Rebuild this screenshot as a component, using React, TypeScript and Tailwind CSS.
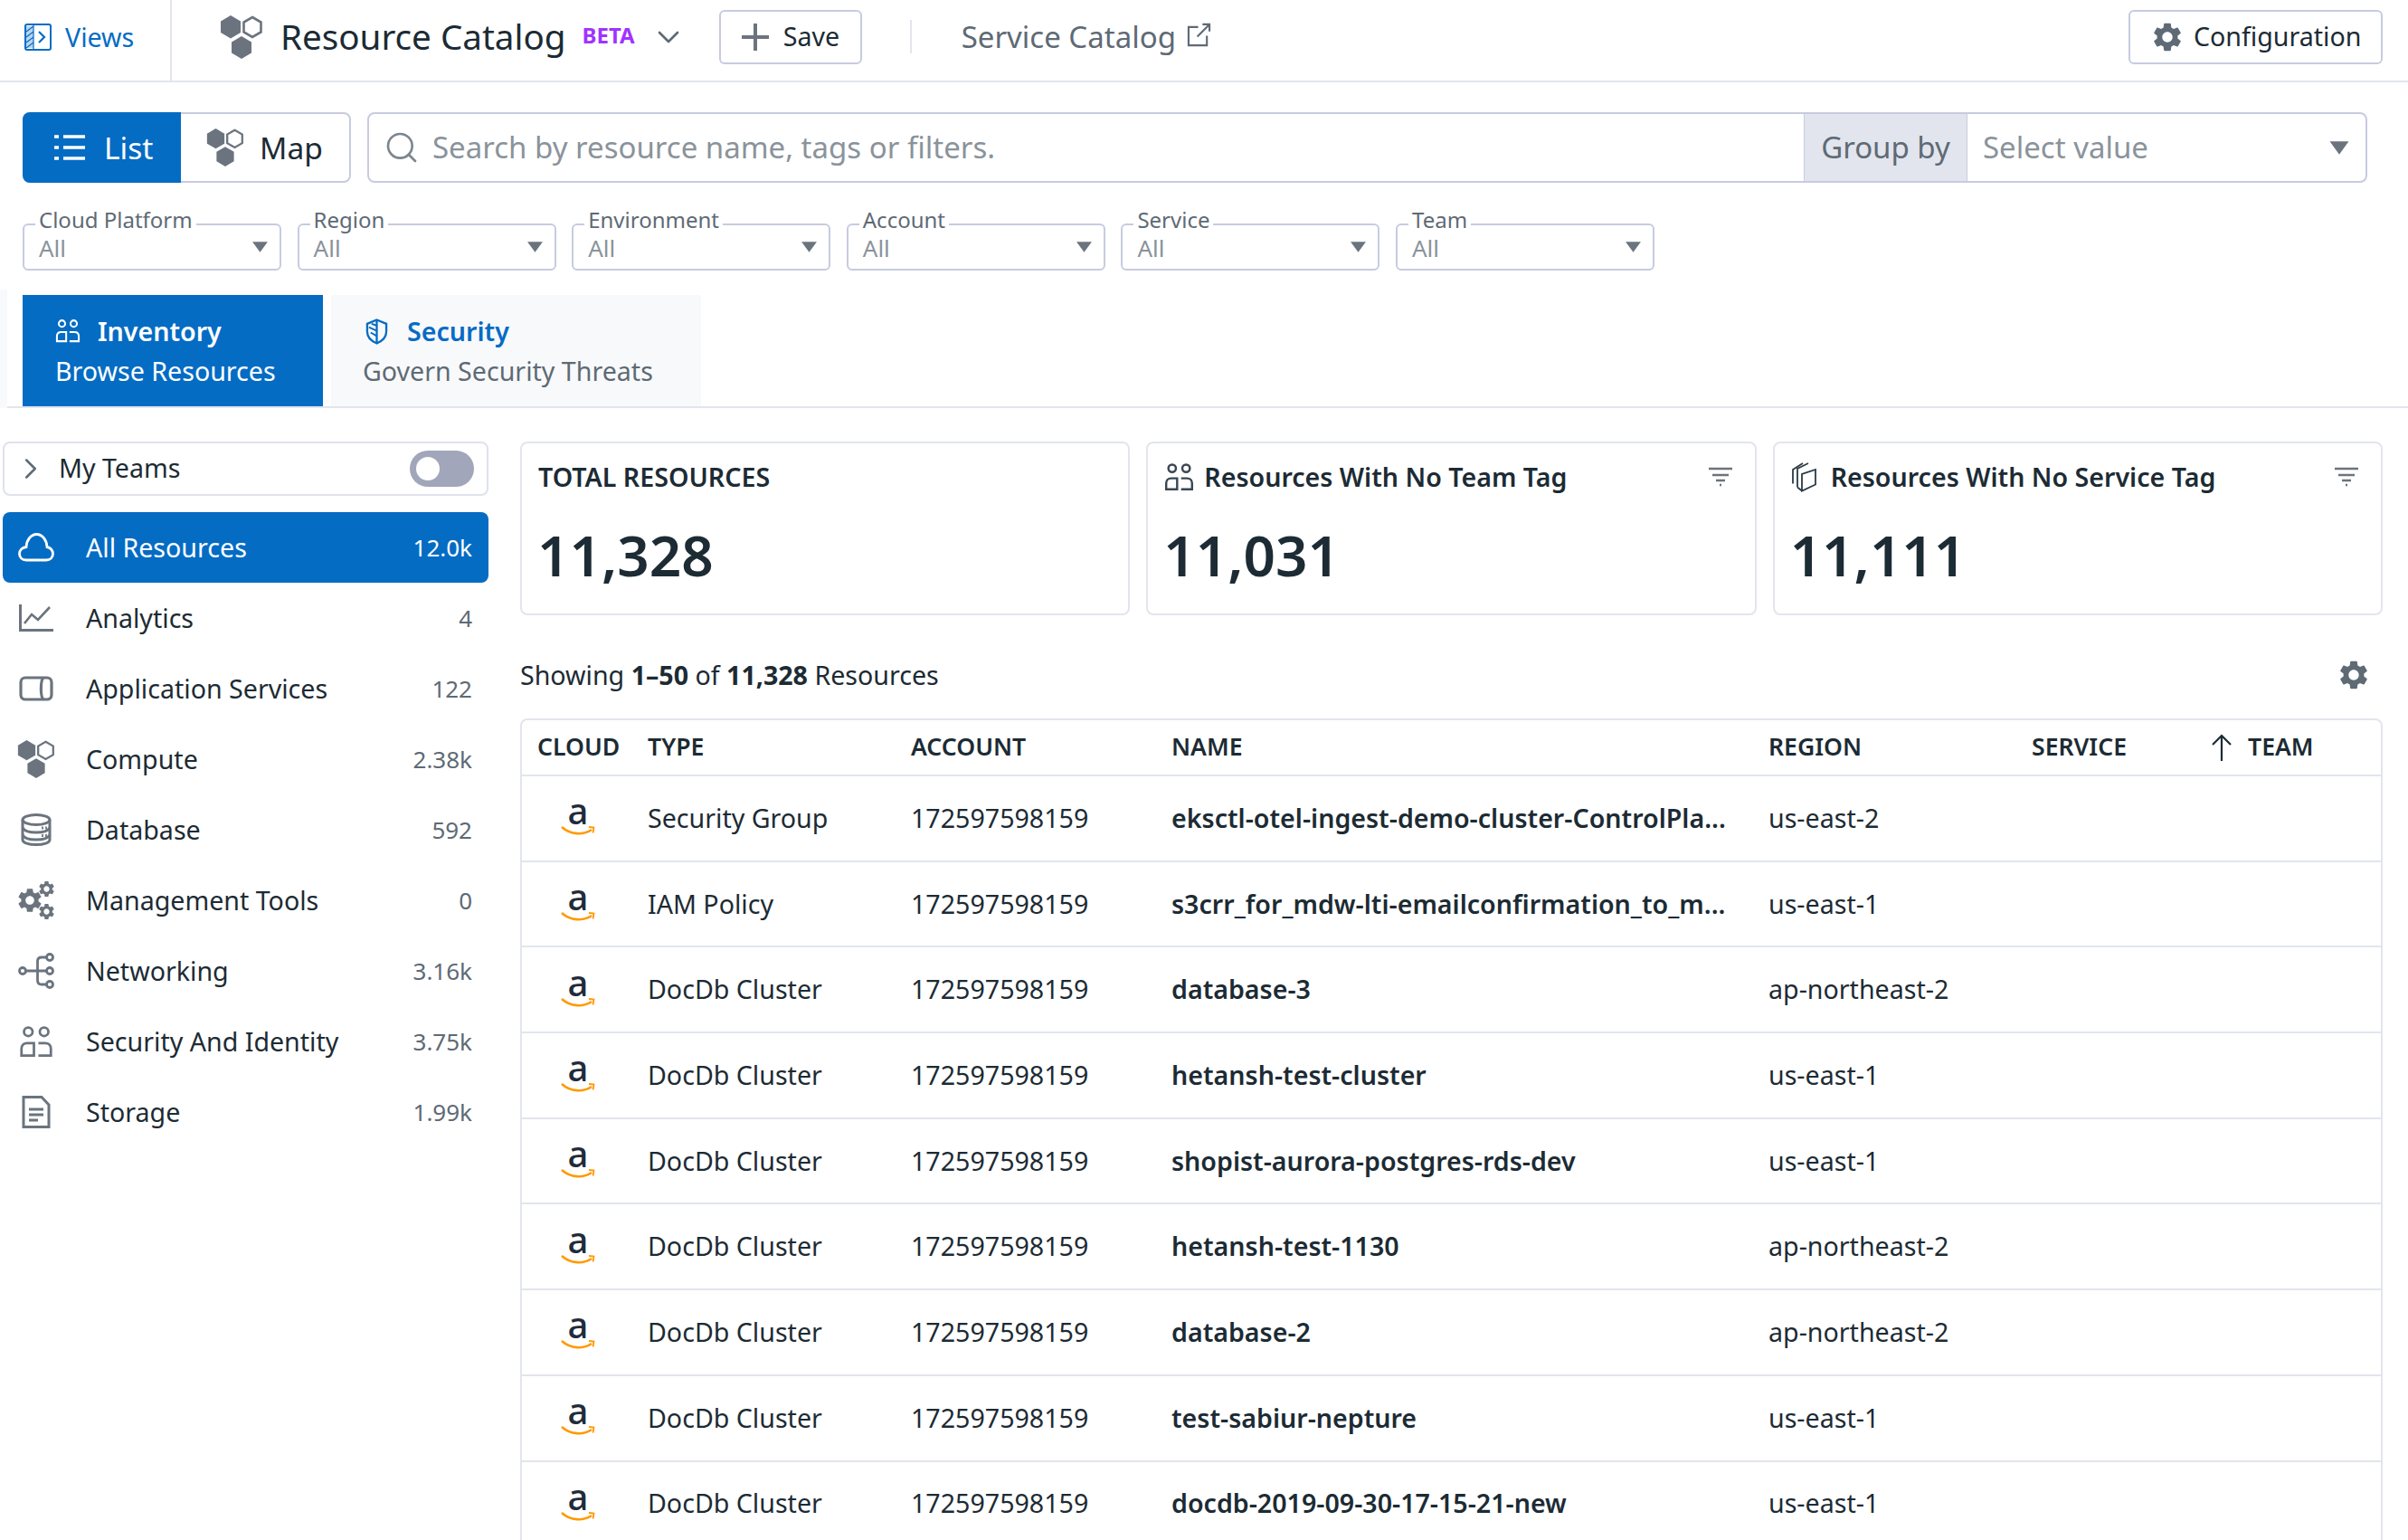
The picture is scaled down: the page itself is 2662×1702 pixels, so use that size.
import React from "react";
import { MdSettings } from "react-icons/md";
import { ChevronDown, ChevronRight, Search } from "lucide-react";

const Hexes = ({ className = "" }: { className?: string }) => (
  <svg viewBox="0 0 48 48" className={className}>
    <path d="M12 0l11 6.500v12.500L12 25.500 1 19V6.500z" fill="#6b747e" />
    <path d="M36 2l9.500 5.500v11L36 24l-9.500-5.500v-11z" fill="none" stroke="#6b747e" strokeWidth="2.600" />
    <path d="M24 23l11 6.500v12L24 48l-11-6.500v-12z" fill="#6b747e" />
  </svg>
);

const TeamIcon = ({ className = "", color = "#6b747e" }: { className?: string; color?: string }) => (
  <svg viewBox="0 0 30 28" className={className} fill="none" stroke={color} strokeWidth="2.200">
    <circle cx="8" cy="5" r="3.800" />
    <circle cx="22" cy="5" r="3.800" />
    <path d="M13 26H2v-6c0-3 2-5 5-5h6z" />
    <path d="M17 26h11v-6c0-3-2-5-5-5h-6" />
  </svg>
);

const CloudIcon = () => (
  <svg viewBox="0 0 40 32" className="w-[40px] h-[32px]" fill="none" stroke="#fff" strokeWidth="2.800">
    <path d="M9 30h22c4.500 0 7.500-3 7.500-7 0-4-3-7-6.500-7.500C31.500 8 27 1.500 20.500 1.500 14 1.500 9.500 8 9 15.500 4.500 16 1.500 19 1.500 23c0 4 3 7 7.500 7z" />
  </svg>
);

const AnalyticsIcon = () => (
  <svg viewBox="0 0 38 30" className="w-[38px] h-[30px]" fill="none" stroke="#6b747e" strokeWidth="2.600">
    <path d="M1.500 0v28.500H38" strokeWidth="3" />
    <path d="M6 21l8-10 7 6L34 3" />
  </svg>
);

const AppIcon = () => (
  <svg viewBox="0 0 38 28" className="w-[38px] h-[28px]" fill="none" stroke="#6b747e" strokeWidth="3.200">
    <rect x="2" y="2" width="34" height="24" rx="5" />
    <path d="M27 2c-3.500 3-3.500 21 0 24" />
  </svg>
);

const DbIcon = () => (
  <svg viewBox="0 0 34 36" className="w-[34px] h-[36px]" fill="none" stroke="#6b747e" strokeWidth="3">
    <ellipse cx="17" cy="7" rx="15" ry="5.500" />
    <path d="M2 7v22c0 3.500 7 5.500 15 5.500S32 32.500 32 29V7" />
    <path d="M2 16c2 4 7 5 15 5s13-1 15-5M2 24c2 4 7 5 15 5s13-1 15-5" />
    <path d="M24 14.500v3M28 14.500v3M24 23v3M28 23v3" strokeWidth="1.800" />
  </svg>
);

const GearsIcon = () => (
  <div className="relative w-[40px] h-[40px]">
    <MdSettings className="absolute left-[-3px] top-[4px] text-[32px] text-[#6b747e]" />
    <MdSettings className="absolute right-[-2px] top-[-3px] text-[21px] text-[#6b747e]" />
    <MdSettings className="absolute right-[-2px] bottom-[-3px] text-[21px] text-[#6b747e]" />
  </div>
);

const NetIcon = () => (
  <svg viewBox="0 0 40 40" className="w-[40px] h-[40px]" fill="none" stroke="#6b747e" strokeWidth="2.800">
    <circle cx="5" cy="20" r="3.500" />
    <circle cx="35" cy="5" r="3.500" />
    <circle cx="35" cy="20" r="3.500" />
    <circle cx="35" cy="35" r="3.500" />
    <path d="M8.500 20h23M31.500 5H26c-3 0-4.500 2-4.500 4.500v21c0 2.500 1.500 4.500 4.500 4.500h5.500" />
  </svg>
);

const DocIcon = () => (
  <svg viewBox="0 0 32 36" className="w-[32px] h-[36px]" fill="none" stroke="#6b747e" strokeWidth="3">
    <path d="M2 1.500h20L30 10v24.500H2z" />
    <path d="M8 15h16M8 21h16M8 27h10" />
  </svg>
);

const TagIcon = () => (
  <svg viewBox="0 0 28 33" className="w-[28px] h-[33px]" fill="none" stroke="#2c3a45" strokeWidth="1.800">
    <path d="M12 31.500V13l15-5v16.500z" />
    <path d="M7 27.500V7L19 1M2 23.500V8L13 1" />
    <path d="M7 27.500l5 4" />
  </svg>
);

const FilterIcon = () => (
  <svg viewBox="0 0 28 22" className="w-[28px] h-[22px]" stroke="#6b747e" strokeWidth="2.400">
    <path d="M1 2h26M5 9h18M9 15h10M13 20h2" />
  </svg>
);

const ViewsIcon = () => (
  <svg viewBox="0 0 30 30" className="w-[30px] h-[30px]" fill="none" stroke="#056cc4" strokeWidth="2">
    <rect x="1" y="1" width="28" height="28" rx="2" />
    <path d="M2 3h8v24H2z" fill="#b9d5ee" stroke="none" />
    <path d="M2 9l8-6M2 15l8-6M2 21l8-6M2 27l8-6" strokeWidth="1.200" />
    <path d="M10 1v28" strokeWidth="1.200" />
    <path d="M16 9l6 6-6 6" strokeWidth="2.200" />
  </svg>
);

const ShieldIcon = () => (
  <svg viewBox="0 0 26 30" className="w-[25px] h-[29px]" fill="none" stroke="#056cc4" strokeWidth="2.400">
    <path d="M13 1.500L24 6v9c0 7-5 11-11 13.500C7 26 2 22 2 15V6z" />
    <path d="M13 2v26" />
    <path d="M13 8L7 6M13 14L4 10M13 20L6 16" strokeWidth="2" />
  </svg>
);

const ListIcon = () => (
  <svg viewBox="0 0 34 30" className="w-[34px] h-[30px]" stroke="#fff" strokeWidth="3.400">
    <path d="M0 3h5M10 3h24M0 15h5M10 15h24M0 27h5M10 27h24" />
  </svg>
);

const ExternalIcon = () => (
  <svg viewBox="0 0 28 28" className="w-[27px] h-[27px]" fill="none" stroke="#5e6a75" strokeWidth="2.200">
    <path d="M13 5H2v21h21V15" />
    <path d="M12 16L26 2M18 2h8v8" />
  </svg>
);

const Caret = ({ className = "" }: { className?: string }) => (
  <svg viewBox="0 0 18 13" className={className}>
    <path d="M1 1h16l-8 11z" fill="#6b747e" />
  </svg>
);

const SortArrow = () => (
  <svg viewBox="0 0 24 30" className="w-[24px] h-[30px]" fill="none" stroke="#1c2b34" strokeWidth="2.200">
    <path d="M12 30V2M2 12L12 2l10 10" />
  </svg>
);

const Amazon = () => (
  <div className="relative w-[44px] h-[50px] flex justify-center">
    <span className="text-[40px] leading-[40px] font-medium text-[#1f2c3c]">a</span>
    <svg viewBox="0 0 38 12" className="absolute left-[3px] bottom-[2px] w-[38px] h-[12px]" fill="none" stroke="#ff9900" strokeWidth="2.600">
      <path d="M1 2c10 9 24 9 33 3" />
      <path d="M31 2l5.500 0.500-1 6" strokeWidth="1.800" />
    </svg>
  </div>
);

const filters = ["Cloud Platform", "Region", "Environment", "Account", "Service", "Team"];

const navItems = [
  { label: "Analytics", count: "4", icon: <AnalyticsIcon /> },
  { label: "Application Services", count: "122", icon: <AppIcon /> },
  { label: "Compute", count: "2.38k", icon: <Hexes className="w-[42px] h-[42px]" /> },
  { label: "Database", count: "592", icon: <DbIcon /> },
  { label: "Management Tools", count: "0", icon: <GearsIcon /> },
  { label: "Networking", count: "3.16k", icon: <NetIcon /> },
  { label: "Security And Identity", count: "3.75k", icon: <TeamIcon className="w-[38px] h-[35px]" /> },
  { label: "Storage", count: "1.99k", icon: <DocIcon /> },
];

const rows = [
  ["Security Group", "eksctl-otel-ingest-demo-cluster-ControlPla...", "us-east-2"],
  ["IAM Policy", "s3crr_for_mdw-lti-emailconfirmation_to_m...", "us-east-1"],
  ["DocDb Cluster", "database-3", "ap-northeast-2"],
  ["DocDb Cluster", "hetansh-test-cluster", "us-east-1"],
  ["DocDb Cluster", "shopist-aurora-postgres-rds-dev", "us-east-1"],
  ["DocDb Cluster", "hetansh-test-1130", "ap-northeast-2"],
  ["DocDb Cluster", "database-2", "ap-northeast-2"],
  ["DocDb Cluster", "test-sabiur-nepture", "us-east-1"],
  ["DocDb Cluster", "docdb-2019-09-30-17-15-21-new", "us-east-1"],
];

const Card = ({ icon, title, value, filter }: { icon?: React.ReactNode; title: string; value: string; filter?: boolean }) => (
  <div className="flex-1 h-[192px] rounded-[8px] border-2 border-[#e2e5ed] pl-[18px] pr-[24px] pt-[17px]">
    <div className="flex items-center h-[40px]">
      {icon}
      <span className="text-[28.600px] font-semibold text-[#1c2b34] flex-1 whitespace-nowrap">{title}</span>
      {filter && <FilterIcon />}
    </div>
    <div className="mt-[24px] -ml-[1px] text-[62px] leading-[84px] font-semibold text-[#1c2b34]">{value}</div>
  </div>
);

const colClass = "grid grid-cols-[139px_291px_288px_660px_291px_197px_1fr]";

export default function App() {
  return (
    <div className="w-[2662px] h-[1702px] overflow-hidden bg-white text-[#1c2b34] [font-family:'Noto_Sans',sans-serif]">
      {/* Top bar */}
      <header className="h-[91px] border-b-2 border-[#e2e5ed] flex">
        <div className="w-[190px] h-full border-r-2 border-[#e2e5ed] pl-[27px] pb-[7px] flex items-center gap-[15px]">
          <ViewsIcon />
          <span className="text-[28.600px] text-[#056cc4]">Views</span>
        </div>
        <div className="flex-1 flex items-center pb-[8px]">
          <Hexes className="ml-[53px] w-[48px] h-[48px]" />
          <span className="ml-[19px] text-[38.600px] text-[#1c2b34] whitespace-nowrap">Resource Catalog</span>
          <span className="ml-[18px] -mt-[4px] text-[24px] font-bold text-[#a033ff]">BETA</span>
          <ChevronDown className="ml-[17px] w-[40px] h-[40px] text-[#5e6a75]" strokeWidth={1.6} />
          <button className="ml-[36px] w-[158px] h-[60px] border-2 border-[#c7cbe0] rounded-[6px] flex items-center pl-[23px] gap-[16px] text-[28.600px]">
            <svg viewBox="0 0 30 30" className="w-[30px] h-[30px]" stroke="#6b747e" strokeWidth="4"><path d="M15 0v30M0 15h30" /></svg>
            Save
          </button>
          <span className="ml-[53px] w-[2px] h-[37px] bg-[#e2e5ed]" />
          <span className="ml-[55px] text-[33px] text-[#5e6a75] whitespace-nowrap">Service Catalog</span>
          <span className="ml-[12px] -mt-[4px] flex"><ExternalIcon /></span>
          <button className="ml-auto mr-[28px] w-[281px] h-[60px] border-2 border-[#c7cbe0] rounded-[6px] flex items-center pl-[22px] gap-[10px] text-[28.600px]">
            <MdSettings className="text-[38px] text-[#5e6a75]" />
            Configuration
          </button>
        </div>
      </header>

      {/* Toolbar */}
      <div className="mt-[33px] ml-[25px] mr-[45px] h-[78px] flex">
        <div className="w-[363px] h-full flex text-[33.500px] rounded-[8px] border-2 border-[#c7cbe0]">
          <div className="-m-[2px] mr-0 w-[175px] bg-[#056cc4] rounded-l-[8px] text-white flex items-center pl-[35px] gap-[21px]">
            <ListIcon />
            List
          </div>
          <div className="flex-1 flex items-center pl-[28px] gap-[17px]">
            <Hexes className="w-[42px] h-[42px]" />
            Map
          </div>
        </div>
        <div className="ml-[18px] flex-1 flex rounded-[8px] border-2 border-[#c7cbe0]">
          <div className="flex-1 flex items-center pl-[16px] gap-[14px]">
            <Search className="w-[40px] h-[40px] text-[#7c868f]" strokeWidth={1.6} />
            <span className="text-[33px] text-[#8a939b] whitespace-nowrap">Search by resource name, tags or filters.</span>
          </div>
          <div className="w-[181px] bg-[#e2e5ed] border-x border-[#c7cbe0] flex items-center justify-center text-[33px] text-[#5e6a75]">Group by</div>
          <div className="w-[440px] flex items-center pl-[17px] pr-[17px] justify-between">
            <span className="text-[33px] text-[#8a939b]">Select value</span>
            <Caret className="w-[24px] h-[17px]" />
          </div>
        </div>
      </div>

      {/* Filters */}
      <div className="mt-[45px] ml-[25px] flex gap-[17.600px]">
        {filters.map((f) => (
          <div key={f} className="relative w-[286px] h-[52px] border-2 border-[#c7cbe0] rounded-[6px] flex items-center justify-between pl-[16px] pr-[12px]">
            <span className="absolute left-[12px] -top-[19px] bg-white px-[4px] text-[24px] leading-[26px] text-[#5e6a75] whitespace-nowrap">{f}</span>
            <span className="text-[26px] leading-[30px] mt-[1px] text-[#8a939b]">All</span>
            <Caret className="w-[19px] h-[14px]" />
          </div>
        ))}
      </div>

      {/* Tabs */}
      <div className="mt-[21px] h-[131px] bg-[#f8f9fb]">
        <div className="ml-[8px] h-full pt-[6px] bg-white border-b-2 border-[#e2e5ed] flex pl-[17px] gap-[9px]">
          <div className="w-[332px] h-[123px] bg-[#056cc4] text-white pl-[36px] pt-[18px]">
            <div className="flex items-center gap-[19px] h-[44px]">
              <TeamIcon className="w-[28px] h-[26px]" color="#ffffff" />
              <span className="text-[28.600px] font-semibold">Inventory</span>
            </div>
            <div className="text-[28.600px] leading-[44px]">Browse Resources</div>
          </div>
          <div className="w-[409px] h-[123px] bg-[#f8f9fb] pl-[35px] pt-[18px]">
            <div className="flex items-center gap-[21px] h-[44px] pl-[3px]">
              <ShieldIcon />
              <span className="text-[28.600px] font-semibold text-[#056cc4]">Security</span>
            </div>
            <div className="text-[28.600px] leading-[44px] text-[#5e6a75]">Govern Security Threats</div>
          </div>
        </div>
      </div>

      {/* Body */}
      <div className="mt-[37px] flex pl-[3px] pr-[28px] gap-[35px]">
        <aside className="w-[537px] shrink-0">
          <div className="h-[60px] border-2 border-[#dfe2ec] rounded-[8px] flex items-center pl-[10px] pr-[14px]">
            <ChevronRight className="w-[38px] h-[38px] text-[#5e6a75]" strokeWidth={1.6} />
            <span className="ml-[12px] -mt-[1px] text-[28.600px] flex-1">My Teams</span>
            <span className="w-[71px] h-[40px] rounded-full bg-[#a1a6ba] flex items-center pl-[7px]">
              <span className="w-[26px] h-[26px] rounded-full bg-white" />
            </span>
          </div>
          <div className="mt-[18px] h-[78px] rounded-[8px] bg-[#056cc4] text-white flex items-center pl-[17px] pr-[18px]">
            <CloudIcon />
            <span className="ml-[35px] text-[28.600px] flex-1">All Resources</span>
            <span className="text-[26px]">12.0k</span>
          </div>
          {navItems.map((n) => (
            <div key={n.label} className="h-[78px] flex items-center pr-[18px]">
              <span className="w-[74px] flex justify-center">{n.icon}</span>
              <span className="ml-[18px] text-[28.600px] flex-1">{n.label}</span>
              <span className="text-[26px] text-[#5e6a75]">{n.count}</span>
            </div>
          ))}
        </aside>

        <main className="flex-1 min-w-0">
          <div className="flex gap-[18px]">
            <Card title="TOTAL RESOURCES" value="11,328" />
            <Card icon={<TeamIcon className="mr-[11px] w-[33px] h-[31px]" color="#3a4753" />} title="Resources With No Team Tag" value="11,031" filter />
            <Card icon={<span className="mr-[16px] flex"><TagIcon /></span>} title="Resources With No Service Tag" value="11,111" filter />
          </div>
          <div className="mt-[44px] h-[44px] flex items-center justify-between pr-[13px]">
            <span className="text-[28.600px]">Showing <b className="font-bold">1–50</b> of <b className="font-bold">11,328</b> Resources</span>
            <MdSettings className="text-[38px] text-[#5e6a75]" />
          </div>
          <div className="mt-[26px] rounded-t-[8px] border-2 border-[#e2e5ed]">
            <div className={`${colClass} h-[60px] items-center text-[26.600px] font-semibold`}>
              <span className="pl-[17px]">CLOUD</span>
              <span>TYPE</span>
              <span>ACCOUNT</span>
              <span>NAME</span>
              <span>REGION</span>
              <span>SERVICE</span>
              <span className="flex items-center gap-[17px] ml-[1px]">
                <SortArrow />
                <span>TEAM</span>
              </span>
            </div>
            {rows.map((r, i) => (
              <div key={i} className={`${colClass} h-[94.700px] items-center border-t-2 border-[#e2e5ed] text-[28.600px]`}>
                <span className="pl-[40px] -mt-[6px]"><Amazon /></span>
                <span className="whitespace-nowrap">{r[0]}</span>
                <span>172597598159</span>
                <span className="font-semibold whitespace-nowrap">{r[1]}</span>
                <span className="whitespace-nowrap">{r[2]}</span>
                <span />
                <span />
              </div>
            ))}
          </div>
        </main>
      </div>
    </div>
  );
}
